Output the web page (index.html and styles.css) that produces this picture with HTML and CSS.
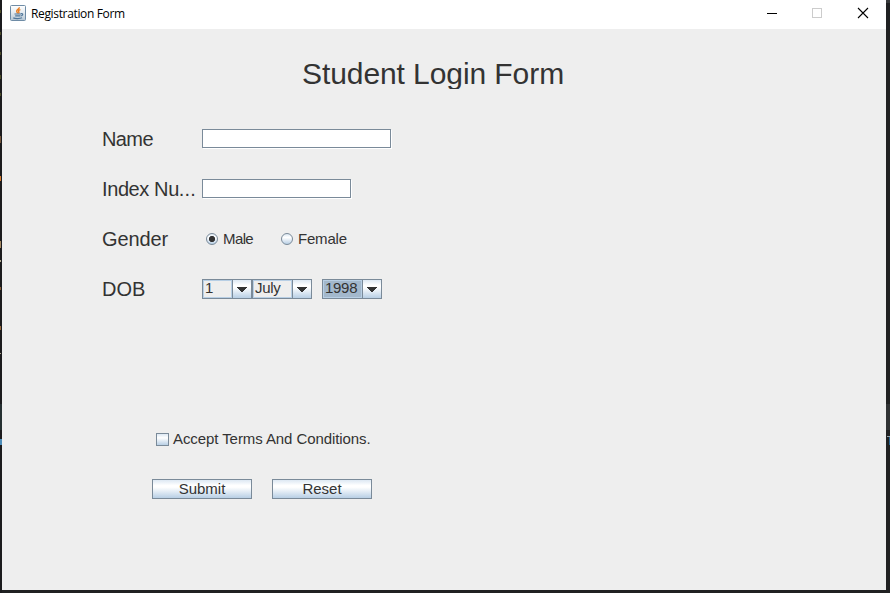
FILE: index.html
```html
<!DOCTYPE html>
<html lang="en">
<head>
<meta charset="utf-8">
<title>Registration Form</title>
<link rel="stylesheet" href="styles.css">
</head>
<body>
<div class="edge edge-left"></div>
<main class="window">
  <header class="titlebar">
    <svg class="app-icon" width="16" height="16" viewBox="0 0 16 16">
      <defs><linearGradient id="tile" x1="0" y1="0" x2="0" y2="1"><stop offset="0" stop-color="#fff"/><stop offset=".45" stop-color="#e6ecf1"/><stop offset="1" stop-color="#b4c5d3"/></linearGradient></defs>
      <rect x=".5" y=".5" width="15" height="15" rx="1" fill="url(#tile)" stroke="#6f8ca6"/>
      <path d="M9.2 2.3C9.8 4 6.3 4.7 6.7 6.3C6.9 7.2 7.7 7.6 7.6 8.5M10.4 4.6C8.7 5.1 8.1 5.9 8.8 6.8C9.2 7.3 9 7.9 8.5 8.4" fill="none" stroke="#e87d22" stroke-width="1.4"/>
      <path d="M4.500 9H11M5.200 10.900H10.500M3.300 12.900C5.400 13.900 10 13.800 12 12.800M11 8.700C13.400 8.100 13.200 10.300 11.200 10.900" fill="none" stroke="#4f7699" stroke-width="1.2"/>
    </svg>
    <span class="caption">Registration Form</span>
    <svg class="controls" width="106" height="14" viewBox="0 0 106 14" shape-rendering="crispEdges" fill="none">
      <path d="M1 6.5H11" stroke="#000"/>
      <rect x="46.500" y="1.500" width="9" height="9" stroke="#ccc"/>
      <path d="M92 1L102 11M102 1L92 11" stroke="#000" stroke-width="1.1" shape-rendering="auto"/>
    </svg>
  </header>
  <form class="form">
    <h1 class="heading"><span>Student Login Form</span></h1>
    <div class="row">
      <label class="label name" for="name">Name</label>
      <input class="field" id="name" type="text">
    </div>
    <div class="row">
      <label class="label" for="index"><span class="index">Index Nu</span><span class="dots">...</span></label>
      <input class="field short" id="index" type="text">
    </div>
    <div class="row">
      <span class="label gender">Gender</span>
      <span class="choice male"><i class="radio on"></i><span>Male</span></span>
      <span class="choice female"><i class="radio"></i><span>Female</span></span>
    </div>
    <div class="row">
      <span class="label">DOB</span>
      <div class="combo day"><span class="value">1</span><span class="arrow"><svg width="10" height="5" shape-rendering="crispEdges"><path d="M0 0H10V1H9V2H8V3H7V4H6V5H4V4H3V3H2V2H1V1H0Z" fill="#333"/></svg></span></div>
      <div class="combo"><span class="value">July</span><span class="arrow"><svg width="10" height="5" shape-rendering="crispEdges"><path d="M0 0H10V1H9V2H8V3H7V4H6V5H4V4H3V3H2V2H1V1H0Z" fill="#333"/></svg></span></div>
      <div class="combo year"><span class="value">1998</span><span class="arrow"><svg width="10" height="5" shape-rendering="crispEdges"><path d="M0 0H10V1H9V2H8V3H7V4H6V5H4V4H3V3H2V2H1V1H0Z" fill="#333"/></svg></span></div>
    </div>
    <div class="terms"><i class="check"></i><span>Accept Terms And Conditions.</span></div>
    <div class="actions">
      <button class="button" type="button">Submit</button>
      <button class="button" type="button">Reset</button>
    </div>
  </form>
</main>
<div class="edge edge-right"></div>
</body>
</html>
```
FILE: styles.css
```css
* { box-sizing: border-box; }
body {
  margin: 0;
  width: 890px;
  height: 593px;
  overflow: hidden;
  display: flex;
  background: #202122;
  color: #333;
  font: 15px/20px "Liberation Sans", Arial, sans-serif;
}
.edge { height: 593px; }
.edge-left {
  width: 2px;
  background:
    linear-gradient(#4c8cb8, #4c8cb8) 0 439px / 2px 6px no-repeat,
    linear-gradient(#263032, #263032) 0 404px / 2px 26px no-repeat,
    linear-gradient(#b1aa91, #b1aa91) 0 353px / 1px 1px no-repeat,
    linear-gradient(#98683b, #98683b) 0 326px / 1px 4px no-repeat,
    linear-gradient(#865c37, #865c37) 0 287px / 1px 3px no-repeat,
    linear-gradient(#b1aa91, #b1aa91) 0 260px / 1px 2px no-repeat,
    linear-gradient(#a38760, #a38760) 0 241px / 1px 7px no-repeat,
    linear-gradient(#d67a2c, #d67a2c) 0 176px / 1px 5px no-repeat,
    linear-gradient(#76563b, #76563b) 0 136px / 1px 7px no-repeat,
    linear-gradient(#4c4d26, #4c4d26) 0 93px / 1px 3px no-repeat,
    linear-gradient(#4c4d26, #4c4d26) 0 75px / 1px 4px no-repeat,
    linear-gradient(#4c4d26, #4c4d26) 0 52px / 1px 3px no-repeat,
    linear-gradient(#4c4d26, #4c4d26) 0 32px / 1px 3px no-repeat,
    linear-gradient(#4c4d26, #4c4d26) 0 10px / 1px 3px no-repeat,
    #1b1b1d;
}
.edge-right {
  width: 4px;
  background:
    linear-gradient(#96a4ad, #96a4ad) 1px 436px / 3px 1px no-repeat,
    linear-gradient(#286491, #286491) 3px 437px / 1px 8px no-repeat,
    linear-gradient(#303234, #303234) 0 404px / 4px 26px no-repeat,
    linear-gradient(#37393b, #37393b) 0 0 / 4px 3px no-repeat,
    #202122;
}
.window { width: 884px; height: 590px; background: #eee; }
.titlebar {
  height: 29px;
  display: flex;
  align-items: flex-start;
  padding: 5px 14px 0 8px;
  background: #fff;
}
.caption {
  margin-left: 5px;
  color: #000;
  font: 12px/17px "Open Sans", "Noto Sans", sans-serif;
  letter-spacing: -.35px;
}
.controls { margin: 2px 0 0 auto; }
.form { padding: 30px 0 0 100px; }
.heading {
  width: 300px;
  height: 30px;
  margin: 0 0 40px 200px;
  overflow: hidden;
  font-size: 30px;
  font-weight: 400;
  line-height: 30px;
  letter-spacing: -.08px;
  white-space: nowrap;
}
.row { display: flex; height: 20px; margin-bottom: 30px; }
.label { width: 100px; font-size: 20px; white-space: nowrap; }
.name { letter-spacing: -.6px; }
.index { letter-spacing: -.4px; }
.dots { letter-spacing: .2px; }
.gender { letter-spacing: -.1px; }
.field {
  width: 189px;
  height: 19px;
  padding: 1px 3px;
  border: 1px solid #7a8a99;
  border-radius: 0;
  outline: 0;
  background: #fff;
  box-shadow: 1px 1px #fff;
  font: inherit;
}
.short { width: 149px; }
.choice { display: flex; align-items: center; gap: 5px; padding-left: 4px; }
.male { width: 75px; letter-spacing: -.6px; }
.female { letter-spacing: -.2px; }
.radio {
  width: 12px;
  height: 12px;
  border: 1px solid #7a8a99;
  border-radius: 50%;
  background: linear-gradient(#dde8f3, #fff 35%, #b8cfe5);
}
.on { background: radial-gradient(circle, #333 0 2.8px, transparent 3.3px), linear-gradient(#dde8f3, #fff 35%, #b8cfe5); }
.combo { display: flex; width: 60px; height: 20px; border: 1px solid #7a8a99; }
.day { width: 50px; }
.year { margin-left: 10px; }
.value {
  flex: 1;
  min-width: 0;
  padding-left: 1px;
  border: 1px solid #b8cfe5;
  line-height: 14px;
  letter-spacing: -.3px;
}
.year .value { background: #a3b8cc; }
.arrow {
  display: flex;
  width: 19px;
  align-items: center;
  justify-content: center;
  padding-top: 1px;
  border-left: 1px solid #7a8a99;
  background: linear-gradient(#dde8f3, #fff 30%, #fff 40%, #b8cfe5);
}
.terms { display: flex; align-items: center; gap: 4px; height: 20px; margin: 130px 0 30px 54px; letter-spacing: -.08px; }
.check {
  width: 13px;
  height: 13px;
  border: 1px solid #7a8a99;
  background: linear-gradient(#dde8f3, #fff 35%, #b8cfe5);
}
.actions { display: flex; gap: 20px; margin-left: 50px; }
.button {
  width: 100px;
  height: 20px;
  padding: 0;
  border: 1px solid #7a8a99;
  border-radius: 0;
  background: linear-gradient(#dde8f3, #fff 30%, #fff 40%, #b8cfe5);
  color: #333;
  font: inherit;
  line-height: 18px;
}
```
